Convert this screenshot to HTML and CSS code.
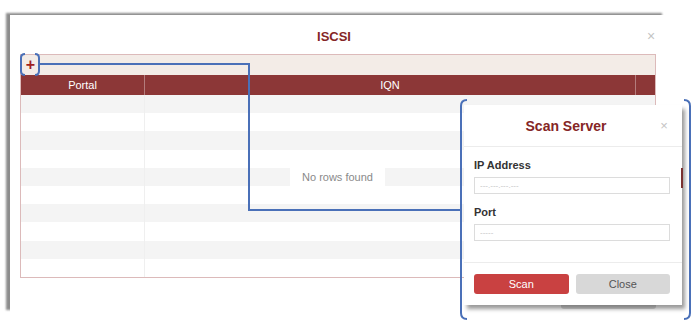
FILE: index.html
```html
<!DOCTYPE html>
<html>
  <head>
    <meta charset="UTF-8">
    <meta name="viewport" content="width=device-width, initial-scale=1.0">
    <title>ISCSI</title>
    <link rel="stylesheet" href="styles.css">
  </head>

  <body>
    <div class="page">
      <div class="modal">
        <div class="modal-head">
          <h1 class="modal-title">ISCSI</h1>
          <span class="modal-close">&times;</span>
        </div>

        <div class="grid">
          <div class="grid-toolbar">
            <button class="add-btn">+</button>
          </div>
          <div class="grid-head">
            <div class="col col-portal">Portal</div>
            <div class="col col-iqn">IQN</div>
            <div class="col col-pad"></div>
          </div>
          <div class="grid-body">
            <div class="row"><div class="cell cell-portal"></div><div class="cell"></div></div>
            <div class="row"><div class="cell cell-portal"></div><div class="cell"></div></div>
            <div class="row"><div class="cell cell-portal"></div><div class="cell"></div></div>
            <div class="row"><div class="cell cell-portal"></div><div class="cell"></div></div>
            <div class="row"><div class="cell cell-portal"></div><div class="cell"></div></div>
            <div class="row"><div class="cell cell-portal"></div><div class="cell"></div></div>
            <div class="row"><div class="cell cell-portal"></div><div class="cell"></div></div>
            <div class="row"><div class="cell cell-portal"></div><div class="cell"></div></div>
            <div class="row"><div class="cell cell-portal"></div><div class="cell"></div></div>
            <div class="row"><div class="cell cell-portal"></div><div class="cell"></div></div>
            <div class="empty">No rows found</div>
          </div>
        </div>

        <div class="modal-foot">
          <button class="btn btn-gray">Close</button>
        </div>
      </div>

      <div class="dialog">
        <div class="dialog-head">
          <h2 class="dialog-title">Scan Server</h2>
          <span class="dialog-close">&times;</span>
        </div>
        <div class="dialog-body">
          <label class="form-label" for="ip-address">IP Address</label>
          <input class="form-input" id="ip-address" type="text" placeholder="---.---.---.---">
          <label class="form-label" for="port">Port</label>
          <input class="form-input" id="port" type="text" placeholder="-----">
        </div>
        <div class="dialog-foot">
          <button class="btn btn-red">Scan</button>
          <button class="btn btn-gray">Close</button>
        </div>
      </div>

      <svg class="callout" width="700" height="328" viewBox="0 0 700 328">
        <path d="M25 54 Q21 54 21 58 L21 71 Q21 75 25 75" />
        <path d="M35 54 Q39 54 39 58 L39 71 Q39 75 35 75" />
        <path d="M39 64 H249 V210 H461" />
        <path d="M467 100 Q461 100 461 106 V313 Q461 319 467 319" />
        <path d="M684 100 Q690 100 690 106 V313 Q690 319 684 319" />
      </svg>
    </div>
  </body>
</html>
```

FILE: styles.css
```css
* {
  box-sizing: border-box;
  font-family: "Liberation Sans", Arial, sans-serif;
}

body {
  margin: 0;
  background: #fff;
}

.page {
  position: relative;
  width: 700px;
  height: 328px;
  overflow: hidden;
}

/* main ISCSI window */

.modal {
  margin: 15px 0 0 10px;
  width: 656px;
  height: 297px;
  padding: 0 10px;
  background: #fff;
  box-shadow: -4px -2px 2px rgba(0, 0, 0, 0.45);
}

.modal-head {
  display: flex;
  align-items: center;
  height: 39px;
}

.modal-title {
  flex: 1;
  margin: 0;
  padding: 4px 0 0 2px;
  text-align: center;
  font-size: 13px;
  font-weight: bold;
  color: #852626;
}

.modal-close {
  width: 10px;
  padding-top: 2px;
  font-size: 14px;
  color: #c4c4c4;
  text-align: center;
}

.grid {
  border: 1px solid #dcbaba;
}

.grid-toolbar {
  height: 20px;
  background: #f3ece7;
  padding-left: 1px;
}

.add-btn {
  width: 17px;
  height: 20px;
  padding: 0;
  border: 0;
  background: transparent;
  color: #a01f1f;
  font-size: 16px;
  font-weight: bold;
  line-height: 18px;
}

.grid-head {
  display: flex;
  height: 20px;
  background: #8c3737;
}

.col {
  color: #fff;
  font-size: 11px;
  line-height: 20px;
  text-align: center;
  border-right: 1px solid rgba(255, 255, 255, 0.35);
}

.col-portal {
  width: 124px;
}

.col-iqn {
  flex: 1;
}

.col-pad {
  width: 19px;
  border-right: 0;
}

.grid-body {
  position: relative;
}

.row {
  display: flex;
  height: 18.2px;
}

.row:nth-child(odd) {
  background: #f4f4f4;
}

.cell {
  flex: 1;
}

.cell-portal {
  flex: none;
  width: 124px;
  border-right: 1px solid #efefef;
}

.empty {
  position: absolute;
  top: 73px;
  left: 269px;
  width: 95px;
  height: 18px;
  background: #fff;
  color: #8a8a8a;
  font-size: 11px;
  line-height: 18px;
  text-align: center;
}

.modal-foot {
  display: flex;
  justify-content: flex-end;
  margin-top: 11px;
}

/* buttons */

.btn {
  height: 20px;
  border: 0;
  border-radius: 3px;
  font-size: 11px;
  padding: 0;
}

.btn-red {
  background: #c94141;
  color: #fff;
}

.btn-gray {
  background: #d8d8d8;
  color: #555;
}

.modal-foot .btn {
  width: 95px;
}

/* scan server dialog */

.dialog {
  position: absolute;
  left: 464px;
  top: 105px;
  width: 218px;
  height: 200px;
  background: #fff;
  box-shadow: 3px 4px 4px rgba(0, 0, 0, 0.4);
}

.dialog::after {
  content: "";
  position: absolute;
  right: -1px;
  top: 63px;
  width: 2px;
  height: 20px;
  background: #7a3030;
}

.dialog-head {
  display: flex;
  align-items: center;
  height: 42px;
  padding: 0 12px 0 10px;
  border-bottom: 1px solid #ececec;
}

.dialog-title {
  flex: 1;
  margin: 0;
  text-align: center;
  font-size: 14px;
  font-weight: bold;
  color: #852626;
}

.dialog-close {
  width: 12px;
  font-size: 13px;
  color: #c4c4c4;
  text-align: center;
}

.dialog-body {
  display: flex;
  flex-direction: column;
  padding: 11px 12px 21px 10px;
  border-bottom: 1px solid #ececec;
}

.form-label {
  font-size: 11px;
  font-weight: bold;
  line-height: 14px;
  color: #333;
}

.form-input {
  height: 17px;
  margin: 5px 0 11px;
  padding: 0 5px;
  border: 1px solid #dcdcdc;
  font-size: 8px;
  color: #555;
}

.form-input:last-child {
  margin-bottom: 0;
}

.form-input::placeholder {
  color: #c4c4c4;
}

.dialog-foot {
  display: flex;
  gap: 7px;
  padding: 11px 12px 0 10px;
}

.dialog-foot .btn {
  flex: 1;
}

/* blue callout drawn over the screenshot */

.callout {
  position: absolute;
  left: 0;
  top: 0;
  pointer-events: none;
}

.callout path {
  fill: none;
  stroke: #4a70b8;
  stroke-width: 2;
}
```
